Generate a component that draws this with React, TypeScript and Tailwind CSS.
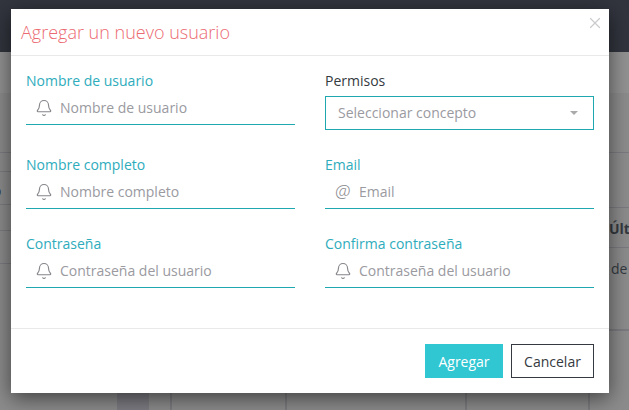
import React from "react";
import { Bell, X } from "lucide-react";

const Field = ({
  label,
  placeholder,
  at,
}: {
  label: string;
  placeholder: string;
  at?: boolean;
}) => (
  <div>
    <label className="block text-[14px] leading-[19px] text-[#2eacbc]">{label}</label>
    <div className="flex items-center h-[34px] mt-px pl-[9px] border-b border-[#1fa8b0] text-[14px] text-[#9a9a9f]">
      <span className="flex items-center w-[25px] shrink-0 text-[#85858a]">
        {at ? (
          <span className="text-[18px] italic font-light pl-px">@</span>
        ) : (
          <Bell size={18} strokeWidth={1.5} />
        )}
      </span>
      <span>{placeholder}</span>
    </div>
  </div>
);

export default function App() {
  return (
    <div className="relative w-[629px] h-[410px] overflow-hidden bg-[#8c8c8c] font-['Open_Sans',sans-serif]">
      {/* page behind the dialog */}
      <div className="h-[52px] bg-[#32353e]" />
      <div className="h-[41px] bg-[#929292]" />
      <div className="flex justify-between h-[238px] text-[14px] text-[#343a40]">
        <div className="w-[11px] overflow-hidden">
          <div className="h-[60px] border-b border-[#7c7c80]" />
          <div className="h-[19px] border-b border-[#7c7c80]" />
          <div className="h-[33px] border-b border-[#7c7c80] -ml-[7px] pt-[9px] leading-[19px]">o</div>
          <div className="h-[26px] border-b border-[#7c7c80]" />
          <div className="h-[33px] border-b border-[#7c7c80]" />
        </div>
        <div className="w-[20px] overflow-hidden">
          <div className="h-[60px] border-b border-[#7c7c80]" />
          <div className="h-[55px] border-b border-[#7c7c80]" />
          <div className="h-[40px] border-b border-[#7c7c80] pt-[11px] leading-[19px] font-bold whitespace-nowrap">Últi</div>
          <div className="h-[83px] border-b-2 border-[#7c7c80] pl-[2px] pt-[11px] leading-[19px] whitespace-nowrap">de</div>
        </div>
      </div>
      <div className="flex h-[79px] pl-[117px]">
        <div className="w-[32px] bg-[#7c7c82]" />
        <div className="w-[23px] border-r-2 border-[#7c7c80]" />
        <div className="w-[115px] border-r-2 border-[#7c7c80]" />
        <div className="w-[180px] border-r-2 border-[#7c7c80]" />
        <div className="w-[123px] border-r-2 border-[#7c7c80]" />
      </div>

      {/* dialog */}
      <div className="absolute left-[11px] top-[9px] w-[598px] h-[384px] bg-white flex flex-col shadow-[0_5px_20px_rgba(0,0,0,0.55)]">
        <div className="relative h-[47px] border-b border-[#e9e9e9] pl-[10px] pt-[9px]">
          <h2 className="text-[18px] leading-[28px] font-light text-[#ec6a72]">Agregar un nuevo usuario</h2>
          <X size={18} strokeWidth={1.6} className="absolute right-[5px] top-[5px] text-[#c9cbcd]" />
        </div>
        <div className="flex-1 grid grid-cols-[269px_269px] gap-x-[30px] gap-y-[25px] content-start px-[15px] pt-[15px]">
          <Field label="Nombre de usuario" placeholder="Nombre de usuario" />
          <div>
            <label className="block text-[14px] leading-[19px] text-[#343a40]">Permisos</label>
            <div className="flex items-center justify-between h-[34px] mt-[6px] pl-[12px] pr-[15px] pb-px border border-[#1fa8b0] text-[14px] text-[#9a9a9f]">
              <span>Seleccionar concepto</span>
              <span className="w-0 h-0 border-x-[4px] border-x-transparent border-t-[4px] border-t-[#aaa]" />
            </div>
          </div>
          <Field label="Nombre completo" placeholder="Nombre completo" />
          <Field label="Email" placeholder="Email" at />
          <Field label="Contraseña" placeholder="Contraseña del usuario" />
          <Field label="Confirma contraseña" placeholder="Contraseña del usuario" />
        </div>
        <div className="h-[65px] border-t border-[#e9e9e9] flex items-start justify-end gap-[8px] pt-[15px] pr-[15px]">
          <button className="w-[78px] h-[34px] bg-[#30c7d3] text-white text-[14px]">Agregar</button>
          <button className="w-[83px] h-[34px] bg-white border border-[#343a40] text-[#343a40] text-[14px]">Cancelar</button>
        </div>
      </div>
    </div>
  );
}
